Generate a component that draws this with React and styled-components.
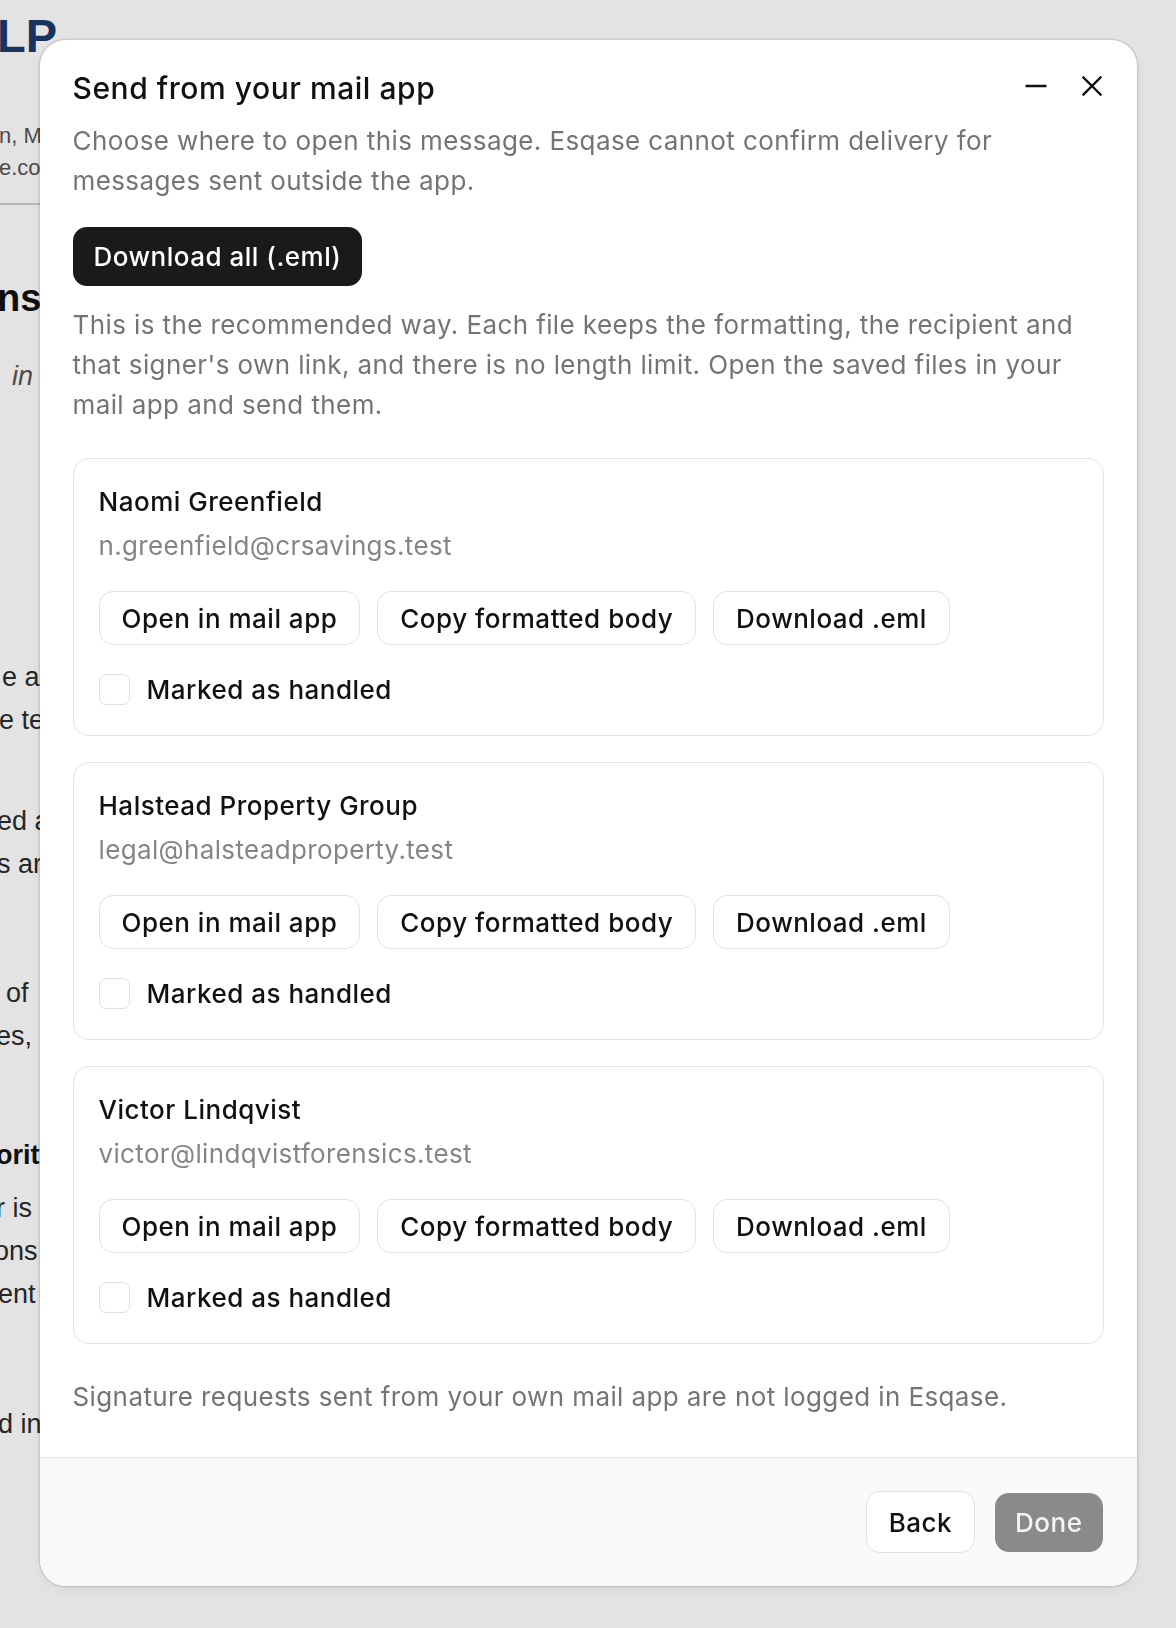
import React, { useState } from 'react';
import styled, { createGlobalStyle } from 'styled-components';

const GlobalStyle = createGlobalStyle`
    html, body {
        margin: 0;
        padding: 0;
        background: #ffffff;
    }
    body {
        width: 1176px;
        height: 1628px;
        overflow: hidden;
    }
    * {
        box-sizing: border-box;
    }
`;

// the document that sits behind the dialog
const Page = styled.div`
    width: 1176px;
    height: 1628px;
    overflow: hidden;
    background: #ffffff;
    font-family: "Liberation Sans", Arial, sans-serif;
    color: #2b2b2b;
`;

const Brand = styled.div`
    margin-top: 8px;
    margin-left: -3px;
    font-size: 47px;
    line-height: 56px;
    font-weight: 700;
    color: #1d3a6b;
    white-space: nowrap;
`;

const PageLine = styled.div`
    margin-left: ${props => props.indent || 0}px;
    margin-top: ${props => props.gap || 0}px;
    font-size: ${props => props.big ? 38 : props.small ? 22 : 27}px;
    line-height: ${props => props.big ? 46 : props.small ? 32 : 43}px;
    font-weight: ${props => props.bold ? 700 : 400};
    font-style: ${props => props.italic ? 'italic' : 'normal'};
    color: ${props => props.muted ? '#555' : props.bold ? '#111' : '#2b2b2b'};
    white-space: pre;
`;

const Rule = styled.hr`
    width: 400px;
    margin: 19px 0 0;
    border: none;
    border-top: 2px solid #cfcfcf;
`;

const Overlay = styled.div`
    position: fixed;
    inset: 0;
    background: rgba(0, 0, 0, 0.11);
    display: flex;
    justify-content: center;
    align-items: flex-start;
    padding-top: 40px;
    font-family: Inter, "Noto Sans", sans-serif;
`;

const Dialog = styled.div`
    width: 1097px;
    background: #ffffff;
    border-radius: 26px;
    overflow: hidden;
    box-shadow: 0 0 0 1.5px rgba(0, 0, 0, 0.1), 0 4px 14px rgba(0, 0, 0, 0.06);
    display: flex;
    flex-direction: column;
`;

const Body = styled.div`
    padding: 30px 33px 40px;
    display: flex;
    flex-direction: column;
`;

const Header = styled.div`
    display: flex;
    align-items: flex-start;
    justify-content: space-between;
`;

const Title = styled.h2`
    margin: 0;
    font-size: 30px;
    line-height: 36px;
    font-weight: 500;
    color: #111;
    letter-spacing: 0.55px;
`;

const WindowControls = styled.div`
    display: flex;
    align-items: center;
    gap: 35px;
    margin-top: 4px;
    margin-right: 2px;
`;

const IconButton = styled.button`
    background: none;
    border: none;
    padding: 0;
    height: 24px;
    display: flex;
    align-items: center;
    justify-content: center;
    cursor: pointer;
    color: #111;
`;

const Muted = styled.p`
    margin: ${props => props.top || 0}px 0 0;
    font-size: 26px;
    line-height: 40px;
    color: #747474;
    font-weight: 400;
    letter-spacing: 0.4px;
`;

const PrimaryButton = styled.button`
    align-self: flex-start;
    margin-top: 26px;
    height: 59px;
    padding: 0 21px;
    border: none;
    border-radius: 14px;
    background: #1a1a1a;
    color: #ffffff;
    font-family: inherit;
    font-size: 26px;
    font-weight: 500;
    letter-spacing: 0.5px;
    cursor: pointer;
`;

const SignerList = styled.div`
    margin-top: 33px;
    display: flex;
    flex-direction: column;
    gap: 26px;
`;

const SignerCard = styled.div`
    border: 1.5px solid #e4e4e4;
    border-radius: 16px;
    padding: 25px 25px 28px;
    display: flex;
    flex-direction: column;
`;

const SignerName = styled.div`
    font-size: 26px;
    line-height: 36px;
    font-weight: 500;
    color: #111;
    letter-spacing: 0.5px;
`;

const SignerEmail = styled.div`
    margin-top: 8px;
    font-size: 26px;
    line-height: 36px;
    color: #858585;
    letter-spacing: 0.35px;
`;

const ActionRow = styled.div`
    margin-top: 27px;
    display: flex;
    gap: 17px;
`;

const OutlineButton = styled.button`
    height: ${props => props.tall ? 62 : 54}px;
    padding: 0 22px;
    background: #ffffff;
    border: 1.5px solid #e2e2e2;
    border-radius: 14px;
    font-family: inherit;
    font-size: 26px;
    font-weight: 500;
    color: #111;
    letter-spacing: 0.5px;
    cursor: pointer;
`;

const CheckRow = styled.label`
    margin-top: 26px;
    display: flex;
    align-items: center;
    gap: 17px;
    height: 36px;
    font-size: 26px;
    font-weight: 500;
    color: #111;
    letter-spacing: 0.5px;
    cursor: pointer;
`;

const CheckBox = styled.span`
    width: 31px;
    height: 31px;
    border: 1.5px solid #e0e0e0;
    border-radius: 7px;
    background: ${props => props.checked ? '#1a1a1a' : '#ffffff'};
    flex-shrink: 0;
`;

const Footer = styled.div`
    border-top: 1.5px solid #e6e6e6;
    background: #f9f9f9;
    height: 129px;
    padding: 0 34px;
    display: flex;
    align-items: center;
    justify-content: flex-end;
    gap: 20px;
`;

const DoneButton = styled.button`
    height: 59px;
    padding: 0 20px;
    border: none;
    border-radius: 14px;
    background: #8a8a8a;
    color: #f4f4f4;
    font-family: inherit;
    font-size: 26px;
    font-weight: 500;
    letter-spacing: 0.5px;
    cursor: default;
`;

const MinusIcon = () => (
    <svg width="22" height="22" viewBox="0 0 22 22" fill="none">
        <line x1="0.5" y1="11" x2="21.5" y2="11" stroke="currentColor" strokeWidth="2.4" />
    </svg>
);

const CloseIcon = () => (
    <svg width="20" height="20" viewBox="0 0 20 20" fill="none">
        <path d="M1.5 1.5L18.5 18.5M18.5 1.5L1.5 18.5" stroke="currentColor" strokeWidth="2.4" strokeLinecap="square" />
    </svg>
);

const signers = [
    { name: 'Naomi Greenfield', email: 'n.greenfield@crsavings.test' },
    { name: 'Halstead Property Group', email: 'legal@halsteadproperty.test' },
    { name: 'Victor Lindqvist', email: 'victor@lindqvistforensics.test' },
];

const BackgroundPage = () => (
    <Page>
        <Brand>LP</Brand>
        <PageLine small gap={56} indent={-1} muted>n, Massachusetts 02108</PageLine>
        <PageLine small indent={-1} muted>e.com · (617) 555-0142</PageLine>
        <Rule />
        <PageLine big bold gap={70} indent={-3}>nstructions</PageLine>
        <PageLine italic muted gap={34} indent={12}>in the matter of</PageLine>
        <PageLine gap={258} indent={2}>e and the parties agree</PageLine>
        <PageLine indent={-1}>e terms set out below</PageLine>
        <PageLine gap={58} indent={-3}>ed and acknowledged</PageLine>
        <PageLine indent={-3}>s are bound by</PageLine>
        <PageLine gap={86} indent={6}>of   the agreement</PageLine>
        <PageLine indent={-4}>es,   and assigns</PageLine>
        <PageLine bold gap={76} indent={-4}>ority of signatures</PageLine>
        <PageLine gap={10} indent={-4}>r is required to sign</PageLine>
        <PageLine indent={-6}>ons of this document</PageLine>
        <PageLine indent={-2}>ent within ten days</PageLine>
        <PageLine gap={87} indent={-2}>d in full force</PageLine>
    </Page>
);

const App = () => {
    const [handled, setHandled] = useState({});

    return (
        <>
            <GlobalStyle />
            <BackgroundPage />
            <Overlay>
                <Dialog role="dialog" aria-label="Send from your mail app">
                    <Body>
                        <Header>
                            <Title>Send from your mail app</Title>
                            <WindowControls>
                                <IconButton aria-label="Minimize"><MinusIcon /></IconButton>
                                <IconButton aria-label="Close"><CloseIcon /></IconButton>
                            </WindowControls>
                        </Header>

                        <Muted top={15}>
                            Choose where to open this message. Esqase cannot confirm delivery for messages sent outside the app.
                        </Muted>

                        <PrimaryButton>Download all (.eml)</PrimaryButton>

                        <Muted top={19}>
                            This is the recommended way. Each file keeps the formatting, the recipient and that signer's own link, and there is no length limit. Open the saved files in your mail app and send them.
                        </Muted>

                        <SignerList>
                            {signers.map(signer => (
                                <SignerCard key={signer.email}>
                                    <SignerName>{signer.name}</SignerName>
                                    <SignerEmail>{signer.email}</SignerEmail>
                                    <ActionRow>
                                        <OutlineButton>Open in mail app</OutlineButton>
                                        <OutlineButton>Copy formatted body</OutlineButton>
                                        <OutlineButton>Download .eml</OutlineButton>
                                    </ActionRow>
                                    <CheckRow onClick={() => setHandled(h => ({ ...h, [signer.email]: !h[signer.email] }))}>
                                        <CheckBox checked={!!handled[signer.email]} />
                                        Marked as handled
                                    </CheckRow>
                                </SignerCard>
                            ))}
                        </SignerList>

                        <Muted top={33}>
                            Signature requests sent from your own mail app are not logged in Esqase.
                        </Muted>
                    </Body>

                    <Footer>
                        <OutlineButton tall>Back</OutlineButton>
                        <DoneButton disabled>Done</DoneButton>
                    </Footer>
                </Dialog>
            </Overlay>
        </>
    );
};

export default App;
